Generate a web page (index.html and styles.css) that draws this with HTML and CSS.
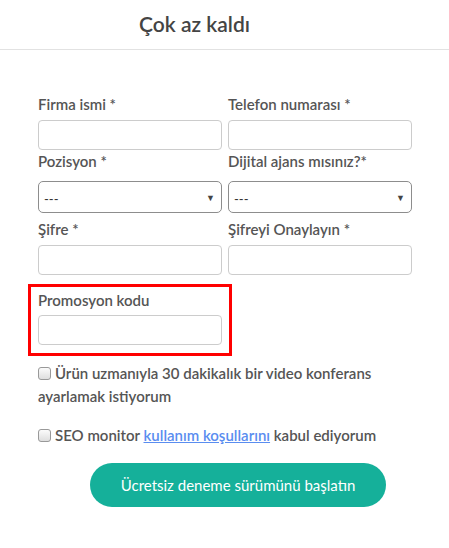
FILE: index.html
```html
<!DOCTYPE html>
<html lang="tr">
<head>
<meta charset="utf-8">
<link rel="stylesheet" href="styles.css">
</head>
<body>
<div class="modal">
  <div class="header"><h2 class="title">Çok az kaldı</h2></div>
  <form class="form">
    <div class="grid">
      <div class="field">
        <label class="label">Firma ismi *</label>
        <input class="input" type="text">
      </div>
      <div class="field">
        <label class="label">Telefon numarası *</label>
        <input class="input" type="text">
      </div>
      <div class="field">
        <label class="label">Pozisyon *</label>
        <div class="select"><span>---</span><span class="arrow">▼</span></div>
      </div>
      <div class="field">
        <label class="label">Dijital ajans mısınız?*</label>
        <div class="select"><span>---</span><span class="arrow">▼</span></div>
      </div>
      <div class="field">
        <label class="label">Şifre *</label>
        <input class="input" type="password">
      </div>
      <div class="field">
        <label class="label">Şifreyi Onaylayın *</label>
        <input class="input" type="password">
      </div>
    </div>
    <div class="promo">
      <label class="label">Promosyon kodu</label>
      <input class="input promo-input" type="text">
    </div>
    <div class="check check-first">
      <span class="box"></span>Ürün uzmanıyla 30 dakikalık bir video konferans ayarlamak istiyorum
    </div>
    <div class="check check-second">
      <span class="box"></span>SEO monitor <a class="link" href="#">kullanım koşullarını</a> kabul ediyorum
    </div>
    <div class="actions">
      <button class="btn" type="button">Ücretsiz deneme sürümünü başlatın</button>
    </div>
  </form>
</div>
</body>
</html>
```

FILE: styles.css
```css
* { box-sizing: border-box; }
html, body { margin: 0; padding: 0; background: #fff; }
body { font-family: Lato, "Noto Sans", sans-serif; color: #555; }

.modal { width: 449px; }

.header {
  height: 50px;
  border-bottom: 1px solid #e2e2e2;
  padding-left: 139px;
}
.title {
  margin: 0;
  padding-top: 11px;
  font-size: 21px;
  line-height: 26px;
  font-weight: 600;
  color: #444;
}

.form { padding: 44px 37px 0 38px; }

.grid {
  display: grid;
  grid-template-columns: 184px 184px;
  column-gap: 6px;
}
.field { display: flex; flex-direction: column; }

.label {
  display: block;
  font-size: 15px;
  line-height: 20px;
  font-weight: 600;
  color: #555;
}
.input {
  display: block;
  width: 184px;
  height: 30px;
  margin: 6px 0 1px;
  border: 1px solid #ccc;
  border-radius: 4px;
  background: #fff;
  font: inherit;
}
.grid .field:nth-child(n+5) .input { margin-bottom: 0; }

.select {
  display: flex;
  align-items: center;
  justify-content: space-between;
  height: 32px;
  margin: 10px 0 6px;
  padding: 4px 6px 0 5px;
  border: 1px solid #8d8d8d;
  border-radius: 5px;
  font-size: 13px;
  color: #333;
}
.arrow { font-size: 9px; color: #444; padding-bottom: 3px; }

.promo {
  width: 204px;
  margin: 9px 0 0 -10px;
  padding: 3px 7px 8px 7px;
  border: 3px solid #f00;
}
.promo-input { margin: 5px 0 0; }

.check {
  font-size: 15px;
  line-height: 23px;
  font-weight: 600;
  color: #555;
}
.check-first { margin-top: 6px; padding-right: 30px; }
.check-second { margin-top: 16px; }
.box {
  display: inline-block;
  width: 13px;
  height: 13px;
  margin-right: 4px;
  vertical-align: -1px;
  border: 1px solid #999;
  border-radius: 3px;
  background: linear-gradient(#fbfbfb, #dedede);
}
.link { color: #5a8df0; text-decoration: underline; }

.actions { display: flex; padding-left: 52px; margin-top: 16px; }
.btn {
  width: 296px;
  height: 44px;
  border: 0;
  border-radius: 22px;
  background: #15b09a;
  color: #fff;
  font-family: Lato, "Noto Sans", sans-serif;
  font-size: 15px;
}
```
